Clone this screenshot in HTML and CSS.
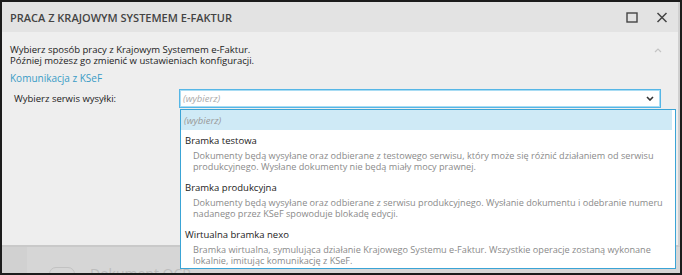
FILE: index.html
```html
<!DOCTYPE html>
<html lang="pl">
<head>
  <meta charset="UTF-8" />
  <title>Praca z Krajowym Systemem e-Faktur</title>
  <link rel="stylesheet" href="styles.css">
</head>
<body>
  <div class="frame">
    <div class="dialog">
      <div class="titlebar">
        <span class="title">PRACA Z KRAJOWYM SYSTEMEM E-FAKTUR</span>
        <div class="controls">
          <svg class="icon-max" width="12" height="11" viewBox="0 0 12 11"><rect x="1" y="1" width="10" height="9" fill="none" stroke="#444" stroke-width="1.4"/></svg>
          <svg class="icon-close" width="12" height="11" viewBox="0 0 12 11"><path d="M1.5 1 L10.5 10 M10.5 1 L1.5 10" stroke="#444" stroke-width="1.5" fill="none"/></svg>
        </div>
      </div>
      <div class="content">
        <div class="intro">
          <div class="intro-text">
            <p>Wybierz sposób pracy z Krajowym Systemem e-Faktur.</p>
            <p>Później możesz go zmienić w ustawieniach konfiguracji.</p>
          </div>
          <svg class="collapse" width="8" height="5" viewBox="0 0 8 5"><path d="M1 4 L4 1 L7 4" stroke="#c4c4c4" stroke-width="1.2" fill="none"/></svg>
        </div>
        <div class="section">Komunikacja z KSeF</div>
        <div class="row">
          <span class="label">Wybierz serwis wysyłki:</span>
          <div class="select">
            <span class="placeholder">(wybierz)</span>
            <svg width="8" height="5" viewBox="0 0 8 5"><path d="M1 1 L4 4 L7 1" stroke="#333" stroke-width="1.6" fill="none"/></svg>
          </div>
        </div>
      </div>
    </div>
    <div class="backdrop">
      <span class="ghost-btn"></span>
      <span class="ghost-text">Dokument OCR</span>
    </div>

    <div class="dropdown">
      <div class="option selected">(wybierz)</div>
      <div class="option">
        <div class="opt-title">Bramka testowa</div>
        <div class="opt-desc">Dokumenty będą wysyłane oraz odbierane z testowego serwisu, który może się różnić działaniem od serwisu produkcyjnego. Wysłane dokumenty nie będą miały mocy prawnej.</div>
      </div>
      <div class="option">
        <div class="opt-title">Bramka produkcyjna</div>
        <div class="opt-desc">Dokumenty będą wysyłane oraz odbierane z serwisu produkcyjnego. Wysłanie dokumentu i odebranie numeru nadanego przez KSeF spowoduje blokadę edycji.</div>
      </div>
      <div class="option">
        <div class="opt-title">Wirtualna bramka nexo</div>
        <div class="opt-desc">Bramka wirtualna, symulująca działanie Krajowego Systemu e-Faktur. Wszystkie operacje zostaną wykonane lokalnie, imitując komunikację z KSeF.</div>
      </div>
    </div>
  </div>
</body>
</html>
```

FILE: styles.css
```css
* {
  box-sizing: border-box;
}

body {
  margin: 0;
  font-family: 'Open Sans', sans-serif;
  font-size: 9.5px;
  color: #222;
  background: #fff;
}

p {
  margin: 0;
}

.frame {
  position: relative;
  width: 682px;
  height: 275px;
  border: 2px solid #1c1c1c;
  background: #d4d4d4;
  overflow: hidden;
  display: flex;
  flex-direction: column;
}

.dialog {
  height: 245px;
  background: #eeeeee;
  border-right: 2px solid #d0d0d0;
  border-bottom: 2px solid #c9c9c9;
  display: flex;
  flex-direction: column;
}

.titlebar {
  height: 30px;
  background: #e3e3e3;
  display: flex;
  align-items: center;
  justify-content: space-between;
  padding: 0 10px 0 8px;
}

.title {
  font-size: 11px;
  font-weight: 600;
  color: #444;
}

.controls {
  display: flex;
  gap: 18px;
  align-items: center;
}

.content {
  padding: 12px 8px 0 8px;
}

.intro {
  display: flex;
  justify-content: space-between;
  align-items: flex-start;
  line-height: 11px;
}

.intro-text p {
  line-height: 11px;
}

.collapse {
  margin: 4px 8px 0 0;
}

.section {
  margin-top: 7px;
  line-height: 11px;
  font-size: 10px;
  color: #3a9cc6;
}

.row {
  margin-top: 5px;
  display: flex;
  align-items: center;
}

.label {
  width: 169px;
  padding-left: 4px;
}

.select {
  width: 482px;
  height: 19px;
  background: #fff;
  border: 1px solid #55b6e6;
  box-shadow: inset 0 0 0 1px #a9dcf3;
  display: flex;
  align-items: center;
  justify-content: space-between;
  padding: 0 6px 0 3px;
}

.placeholder {
  font-style: italic;
  color: #aaa;
}

.backdrop {
  flex: 1;
  position: relative;
  background: #d6d6d6;
  border-left: 25px solid #d1d1d1;
}

.ghost-btn {
  position: absolute;
  left: 22px;
  top: 20px;
  width: 26px;
  height: 14px;
  border: 1px solid #c2c2c2;
  border-radius: 7px;
}

.ghost-text {
  position: absolute;
  left: 63px;
  top: 17px;
  font-size: 14px;
  color: #bdbdbd;
}

.dropdown {
  position: absolute;
  left: 178px;
  top: 107px;
  width: 496px;
  height: 160px;
  background: #fff;
  border: 1px solid #3aa4d6;
  padding: 0 3px 0 0;
}

.option {
  padding: 4px 0 5px 4px;
}

.option.selected {
  height: 20px;
  padding: 0 3px;
  display: flex;
  align-items: center;
  background: #cfeaf6;
  font-style: italic;
  color: #999;
}

.opt-title {
  line-height: 13px;
  color: #222;
}

.opt-desc {
  margin-top: 3px;
  padding-left: 8px;
  font-size: 9.15px;
  line-height: 11px;
  color: #8a8a8a;
}
```
